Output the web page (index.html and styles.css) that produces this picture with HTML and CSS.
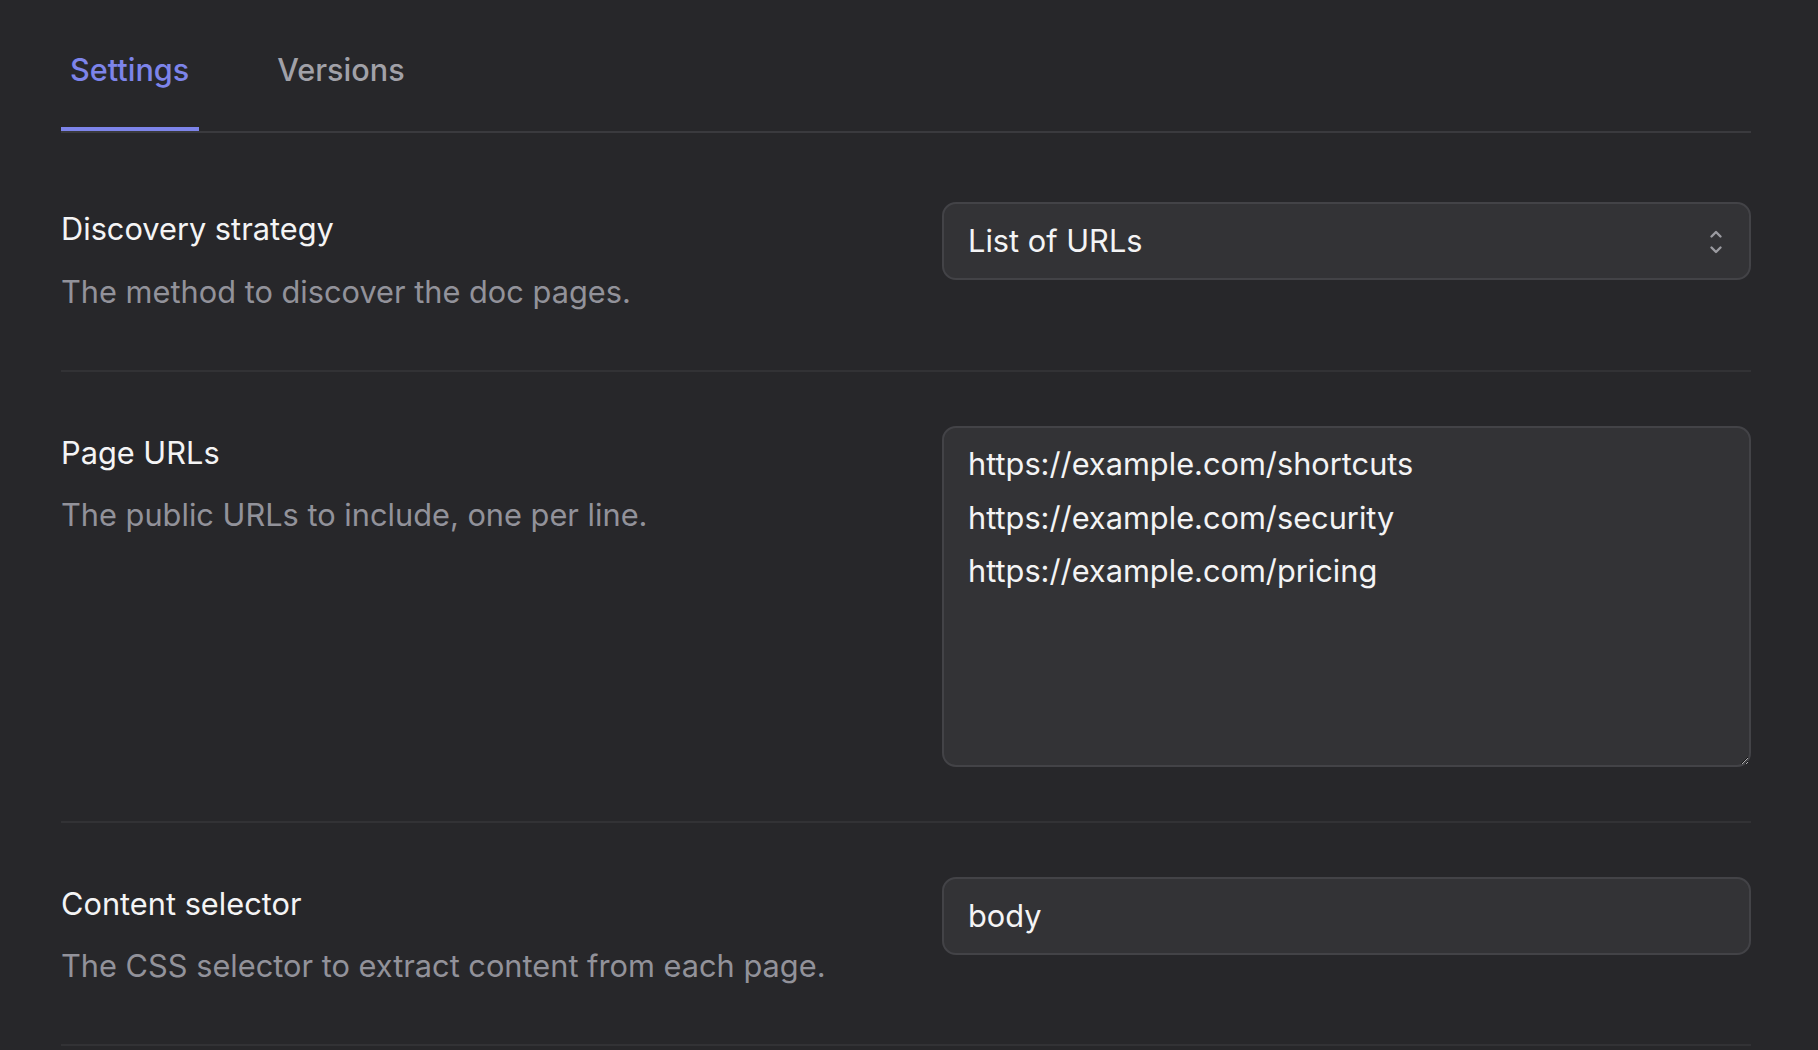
FILE: index.html
```html
<!DOCTYPE html>
<html lang="en">
<head>
<meta charset="utf-8">
<title>Settings</title>
<link rel="stylesheet" href="styles.css">
</head>
<body>
<div class="page">
  <nav class="tabs">
    <div class="tab tab-active">Settings</div>
    <div class="tab">Versions</div>
  </nav>
  <form class="form">
    <div class="row">
      <div class="info">
        <div class="label">Discovery strategy</div>
        <div class="desc">The method to discover the doc pages.</div>
      </div>
      <div class="control">
        <div class="select-wrap">
          <select class="field select">
            <option>List of URLs</option>
            <option>Sitemap</option>
            <option>Crawl</option>
          </select>
          <svg class="chevrons" width="14" height="26" viewBox="0 0 14 26" aria-hidden="true">
            <path d="M2.5 7.5 L7 3 L11.5 7.5" fill="none" stroke="currentColor" stroke-width="2.4" stroke-linecap="round" stroke-linejoin="round"/>
            <path d="M2.5 18.5 L7 23 L11.5 18.5" fill="none" stroke="currentColor" stroke-width="2.4" stroke-linecap="round" stroke-linejoin="round"/>
          </svg>
        </div>
      </div>
    </div>
    <div class="row">
      <div class="info">
        <div class="label">Page URLs</div>
        <div class="desc">The public URLs to include, one per line.</div>
      </div>
      <div class="control">
        <textarea class="field textarea">https://example.com/shortcuts
https://example.com/security
https://example.com/pricing</textarea>
      </div>
    </div>
    <div class="row">
      <div class="info">
        <div class="label">Content selector</div>
        <div class="desc">The CSS selector to extract content from each page.</div>
      </div>
      <div class="control">
        <input class="field input" type="text" value="body">
      </div>
    </div>
  </form>
</div>
</body>
</html>
```

FILE: styles.css
```css
html, body {
  margin: 0;
  background: #27272a;
}

body {
  font-family: Inter, "Noto Sans", sans-serif;
  color: #f4f4f5;
}

.page {
  padding: 48px 67px 0 61px;
}

.tabs {
  display: flex;
  gap: 69px;
  border-bottom: 2px solid #3a3a3e;
}

.tab {
  padding: 0 10px 35px 9px;
  font-size: 30.6px;
  line-height: 44px;
  font-weight: 500;
  color: #a1a1a8;
  border-bottom: 4px solid transparent;
}

.tab-active {
  color: #7d84ea;
  border-bottom-color: #7d84ea;
}

.form {
  margin-top: 15px;
}

.row {
  display: grid;
  grid-template-columns: 1fr 1fr;
  column-gap: 72px;
  padding: 54px 0;
  border-bottom: 2px solid #323235;
}

.info {
  display: flex;
  flex-direction: column;
}

.label {
  font-size: 30.75px;
  line-height: 54px;
  color: #f4f4f5;
}

.desc {
  margin-top: 10.5px;
  font-size: 30.75px;
  line-height: 49px;
  color: #92929a;
}

.control {
  min-width: 0;
}

.field {
  display: block;
  box-sizing: border-box;
  width: 100%;
  margin: 0;
  font-family: Inter, "Noto Sans", sans-serif;
  font-size: 30.75px;
  line-height: 53.5px;
  color: #f4f4f5;
  background: #333336;
  border: 2px solid #434347;
  border-radius: 14px;
  padding: 9.5px 24px;
  outline: none;
}

.select-wrap {
  position: relative;
}

.select {
  -webkit-appearance: none;
  appearance: none;
  height: 78px;
  padding-top: 0;
  padding-bottom: 0;
}

.chevrons {
  position: absolute;
  right: 28px;
  top: 27px;
  color: #9b9ba1;
  pointer-events: none;
}

.textarea {
  height: 341px;
  resize: vertical;
}

.input {
  height: 78px;
}
```
